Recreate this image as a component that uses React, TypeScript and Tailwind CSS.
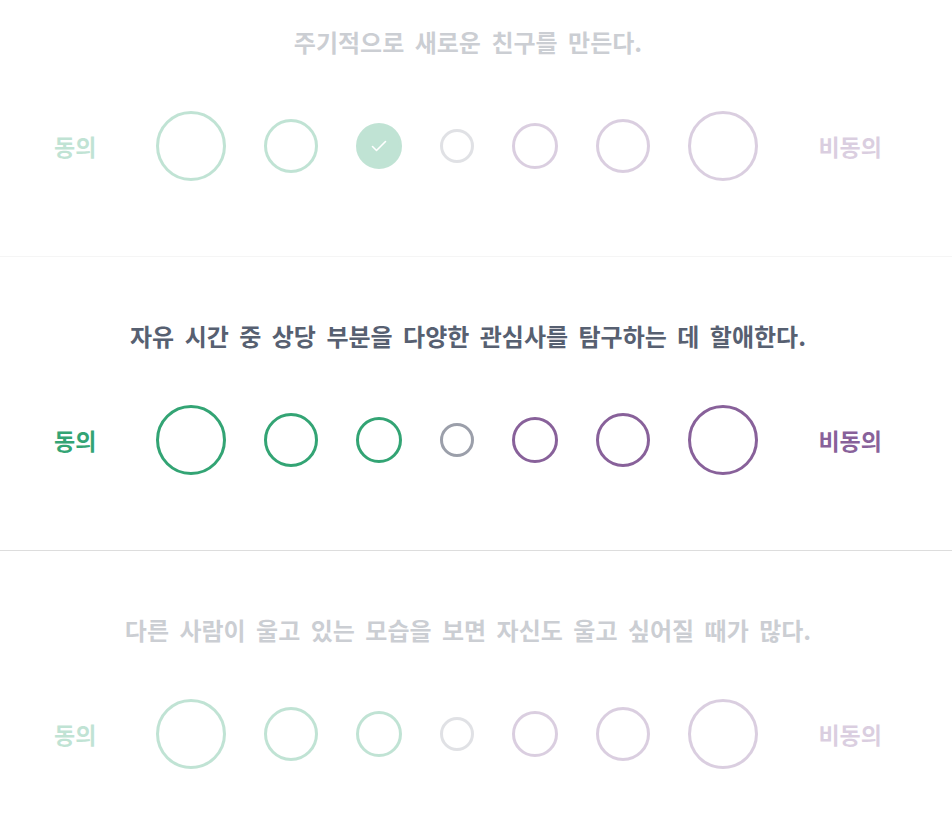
import React from 'react';

interface Question {
  id: number;
  text: string;
  active: boolean;
  selected: number | null;
}

const questions: Question[] = [
  { id: 1, text: '주기적으로 새로운 친구를 만든다.', active: false, selected: 2 },
  { id: 2, text: '자유 시간 중 상당 부분을 다양한 관심사를 탐구하는 데 할애한다.', active: true, selected: null },
  { id: 3, text: '다른 사람이 울고 있는 모습을 보면 자신도 울고 싶어질 때가 많다.', active: false, selected: null },
];

// size + colour for each of the 7 answer options
const options = [
  { size: 'w-[70px] h-[70px]', ring: 'border-[#33a474]', fill: 'bg-[#33a474]' },
  { size: 'w-[54px] h-[54px]', ring: 'border-[#33a474]', fill: 'bg-[#33a474]' },
  { size: 'w-[46px] h-[46px]', ring: 'border-[#33a474]', fill: 'bg-[#33a474]' },
  { size: 'w-[34px] h-[34px]', ring: 'border-[#9b9faa]', fill: 'bg-[#9b9faa]' },
  { size: 'w-[46px] h-[46px]', ring: 'border-[#88619a]', fill: 'bg-[#88619a]' },
  { size: 'w-[54px] h-[54px]', ring: 'border-[#88619a]', fill: 'bg-[#88619a]' },
  { size: 'w-[70px] h-[70px]', ring: 'border-[#88619a]', fill: 'bg-[#88619a]' },
];

const QuestionBlock: React.FC<{ q: Question }> = ({ q }) => {
  return (
    <div className={`border-b border-[#dddddd] ${q.active ? '' : 'opacity-30'}`}>
      <div className="w-[936px] pt-[63px] pb-[75px] flex flex-col items-center">
        <h3 className="text-[24px] leading-[32px] font-bold text-[#576071] text-center [word-spacing:5px]">
          {q.text}
        </h3>

        <div className="mt-[53px] flex items-center justify-center gap-[60px] h-[70px]">
          <span className="text-[23px] font-bold text-[#33a474]">동의</span>

          <div className="flex items-center gap-[38px]">
            {options.map((opt, i) => {
              const isSelected = q.selected === i;
              return (
                <button
                  key={i}
                  className={`${opt.size} rounded-full border-[3px] ${opt.ring} ${
                    isSelected ? opt.fill : 'bg-white'
                  } flex items-center justify-center`}
                >
                  {isSelected && (
                    <svg width="16" height="12" viewBox="0 0 16 12" fill="none">
                      <polyline
                        points="1.5,6.5 5.5,10.5 14.5,1.5"
                        stroke="white"
                        strokeWidth="1.6"
                        strokeLinecap="round"
                        strokeLinejoin="round"
                      />
                    </svg>
                  )}
                </button>
              );
            })}
          </div>

          <span className="text-[23px] font-bold text-[#88619a]">비동의</span>
        </div>
      </div>
    </div>
  );
};

const App: React.FC = () => {
  return (
    <div
      className="min-h-screen bg-white overflow-hidden"
      style={{ fontFamily: '"Noto Sans CJK KR", "Noto Sans", sans-serif' }}
    >
      {/* page is scrolled a little: first question is cut at the top */}
      <div className="-mt-[37px]">
        {questions.map((q) => (
          <QuestionBlock key={q.id} q={q} />
        ))}
      </div>
    </div>
  );
};

export default App;
